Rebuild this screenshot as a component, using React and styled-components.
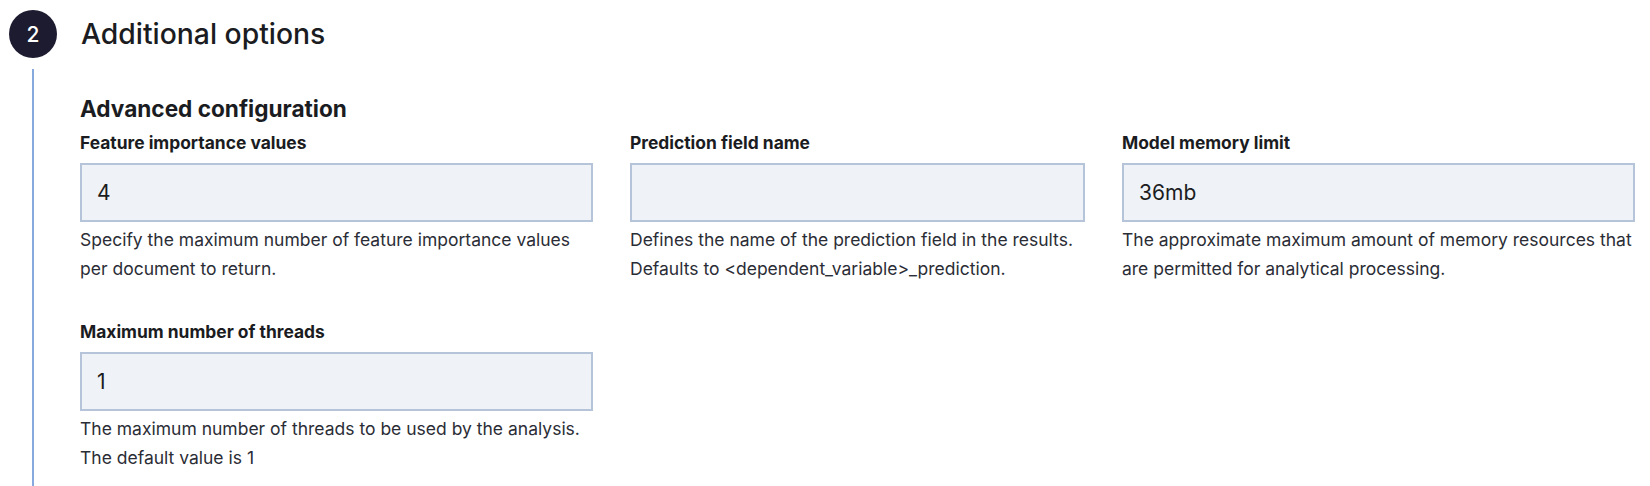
import React from 'react';
import styled, { createGlobalStyle } from 'styled-components';

const GlobalStyle = createGlobalStyle`
    body {
        margin: 0;
        background: #ffffff;
        font-family: Inter, "Noto Sans", "Liberation Sans", sans-serif;
        color: #1a1c21;
    }
`;

const Step = styled.div`
    padding: 10px 0 0 9px;
    height: 476px;
    display: flex;
    flex-direction: column;
`;

const StepHeader = styled.div`
    display: flex;
    flex-direction: row;
    align-items: center;
    gap: 24px;
`;

const StepNumber = styled.div`
    width: 48px;
    height: 48px;
    border-radius: 50%;
    background-color: #1d1b30;
    color: #ffffff;
    display: flex;
    align-items: center;
    justify-content: center;
    font-size: 21px;
    font-weight: 500;
`;

const StepTitle = styled.h2`
    margin: 0;
    font-size: 28.3px;
    font-weight: 500;
    line-height: 36px;
    color: #1a1c21;
`;

const StepBody = styled.div`
    flex: 1;
    margin: 11px 0 0 23px;
    border-left: 2px solid #86a9de;
    padding: 26px 0 0 46px;
`;

const SectionTitle = styled.h3`
    margin: 0 0 10px;
    font-size: 22.6px;
    font-weight: 700;
    line-height: 28px;
    color: #1a1c21;
`;

const FieldGrid = styled.div`
    display: grid;
    grid-template-columns: 513px 455px 513px;
    column-gap: 37px;
    row-gap: 39px;
`;

const Field = styled.div`
    display: flex;
    flex-direction: column;
`;

const Label = styled.label`
    font-size: 17.4px;
    font-weight: 700;
    line-height: 20px;
    margin-bottom: 10px;
    color: #1a1c21;
`;

const Input = styled.input`
    box-sizing: border-box;
    width: 100%;
    height: 59px;
    margin: 0;
    padding: 0 15px;
    border: 2px solid #b6c4d9;
    border-radius: 0;
    background-color: #eff2f6;
    font-family: inherit;
    font-size: 21px;
    color: #1a1c21;
    outline: none;
`;

const Help = styled.div`
    margin-top: 3px;
    font-size: 17.5px;
    line-height: 29px;
    color: #2b2d36;
`;

const fields = [
    {
        label: 'Feature importance values',
        value: '4',
        help: 'Specify the maximum number of feature importance values per document to return.',
    },
    {
        label: 'Prediction field name',
        value: '',
        help: 'Defines the name of the prediction field in the results. Defaults to <dependent_variable>_prediction.',
    },
    {
        label: 'Model memory limit',
        value: '36mb',
        help: 'The approximate maximum amount of memory resources that are permitted for analytical processing.',
    },
    {
        label: 'Maximum number of threads',
        value: '1',
        help: 'The maximum number of threads to be used by the analysis. The default value is 1',
    },
];

export default function App() {
    return (
        <>
            <GlobalStyle />
            <Step>
                <StepHeader>
                    <StepNumber>2</StepNumber>
                    <StepTitle>Additional options</StepTitle>
                </StepHeader>
                <StepBody>
                    <SectionTitle>Advanced configuration</SectionTitle>
                    <FieldGrid>
                        {fields.map((f) => (
                            <Field key={f.label}>
                                <Label>{f.label}</Label>
                                <Input defaultValue={f.value} />
                                <Help>{f.help}</Help>
                            </Field>
                        ))}
                    </FieldGrid>
                </StepBody>
            </Step>
        </>
    );
}
